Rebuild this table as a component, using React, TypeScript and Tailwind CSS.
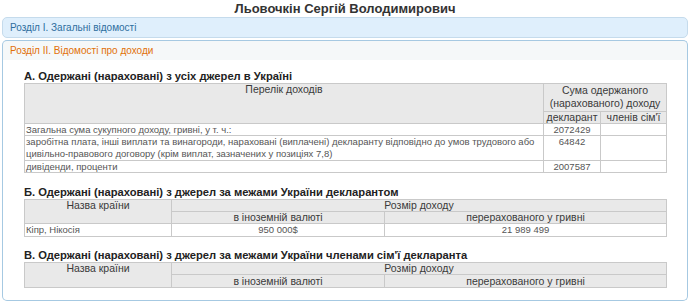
const th = "border border-[#c9c9c9] bg-[#e9e9e9] text-[#3a3a3a] font-normal text-[10.5px] leading-[11px] align-top text-center px-[2px] py-0";
const td = "border border-[#c9c9c9] text-[#555] text-[9.5px] leading-[11px] align-top px-[1px] py-0";

function Heading({ children, className = "" }: { children: React.ReactNode; className?: string }) {
  return <h3 className={"text-[11.2px] leading-[14px] font-bold text-[#222] " + className}>{children}</h3>;
}

export default function App() {
  return (
    <div className="w-[690px] h-[301px] bg-white font-['Liberation_Sans',Arial,sans-serif] overflow-hidden">
      <h1 className="text-center text-[13px] leading-[16px] font-bold text-[#333] pt-[1px]">Льовочкін Сергій Володимирович</h1>

      <div className="mx-[2px] flex flex-col">
        {/* collapsed section */}
        <div className="h-[21px] rounded-[5px] border border-[#c5dbec] bg-[#dfeffc] px-[7px] flex items-center text-[10px] text-[#2e6e9e]">
          Розділ І. Загальні відомості
        </div>

        {/* active section */}
        <div className="mt-[2px] h-[20px] rounded-t-[5px] border border-[#a6c9e2] border-b-0 bg-[#f5f8f9] px-[7px] flex items-center text-[10px] text-[#e17009]">
          Розділ ІІ. Відомості про доходи
        </div>
        <div className="h-[241px] rounded-b-[5px] border border-t-0 border-[#a6c9e2] bg-white pl-[21px] pr-[19px] pt-[9px]">
          <Heading>А. Одержані (нараховані) з усіх джерел в Україні</Heading>
          <table className="w-[642px] border-collapse table-fixed">
            <colgroup>
              <col className="w-[519px]" />
              <col className="w-[57px]" />
              <col className="w-[66px]" />
            </colgroup>
            <thead>
              <tr className="h-[28px]">
                <th rowSpan={2} className={th}>Перелік доходів</th>
                <th colSpan={2} className={th + " leading-[13px]"}>Сума одержаного (нарахованого) доходу</th>
              </tr>
              <tr className="h-[12px]">
                <th className={th}>декларант</th>
                <th className={th}>членів сім'ї</th>
              </tr>
            </thead>
            <tbody>
              <tr>
                <td className={td}>Загальна сума сукупного доходу, гривні, у т. ч.:</td>
                <td className={td + " text-center"}>2072429</td>
                <td className={td}></td>
              </tr>
              <tr>
                <td className={td + " leading-[12px]"}>
                  заробітна плата, інші виплати та винагороди, нараховані (виплачені) декларанту відповідно до умов трудового або цивільно-правового договору (крім виплат, зазначених у позиціях 7,8)
                </td>
                <td className={td + " text-center"}>64842</td>
                <td className={td}></td>
              </tr>
              <tr>
                <td className={td}>дивіденди, проценти</td>
                <td className={td + " text-center"}>2007587</td>
                <td className={td}></td>
              </tr>
            </tbody>
          </table>

          <Heading className="mt-[12px]">Б. Одержані (нараховані) з джерел за межами України декларантом</Heading>
          <table className="w-[642px] border-collapse table-fixed">
            <colgroup>
              <col className="w-[147px]" />
              <col className="w-[213px]" />
              <col className="w-[282px]" />
            </colgroup>
            <thead>
              <tr>
                <th rowSpan={2} className={th}>Назва країни</th>
                <th colSpan={2} className={th}>Розмір доходу</th>
              </tr>
              <tr>
                <th className={th}>в іноземній валюті</th>
                <th className={th}>перерахованого у гривні</th>
              </tr>
            </thead>
            <tbody>
              <tr>
                <td className={td + " leading-[12px]"}>Кіпр, Нікосія</td>
                <td className={td + " leading-[12px] text-center"}>950 000$</td>
                <td className={td + " leading-[12px] text-center"}>21 989 499</td>
              </tr>
            </tbody>
          </table>

          <Heading className="mt-[11px]">В. Одержані (нараховані) з джерел за межами України членами сім'ї декларанта</Heading>
          <table className="w-[642px] border-collapse table-fixed">
            <colgroup>
              <col className="w-[147px]" />
              <col className="w-[213px]" />
              <col className="w-[282px]" />
            </colgroup>
            <thead>
              <tr>
                <th rowSpan={2} className={th}>Назва країни</th>
                <th colSpan={2} className={th}>Розмір доходу</th>
              </tr>
              <tr>
                <th className={th + " leading-[12px]"}>в іноземній валюті</th>
                <th className={th + " leading-[12px]"}>перерахованого у гривні</th>
              </tr>
            </thead>
          </table>
        </div>
      </div>
    </div>
  );
}
